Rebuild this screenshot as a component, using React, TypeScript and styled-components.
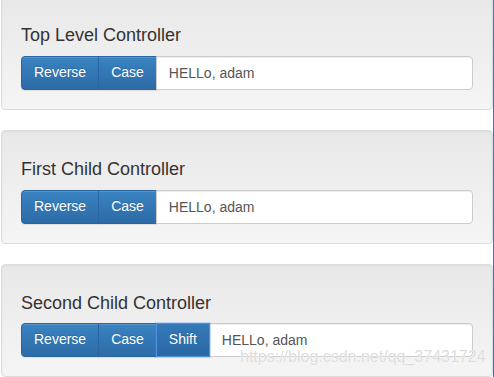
import {FC} from 'react';
import styled, {createGlobalStyle, css} from 'styled-components';

const GlobalStyle = createGlobalStyle`
  html, body {
    margin: 0;
    padding: 0;
    background: #fff;
    overflow: hidden;
  }
  body {
    font-family: "Liberation Sans", Arial, sans-serif;
    font-size: 14px;
    line-height: 1.42857;
    color: #333;
  }
  * {
    box-sizing: border-box;
  }
`;

type ControllerType = {
    title: string
    showShift?: boolean
}

const Controller: FC<ControllerType> = ({title, showShift}) => (
    <Well>
        <Title>{title}</Title>
        <InputGroup>
            <Button>Reverse</Button>
            <Button>Case</Button>
            {showShift && <Button $focused>Shift</Button>}
            <Input defaultValue="HELLo, adam"/>
        </InputGroup>
    </Well>
);

export default function App() {
    return (
        <Page>
            <GlobalStyle/>
            <Controller title="Top Level Controller"/>
            <Controller title="First Child Controller"/>
            <Controller title="Second Child Controller" showShift/>
            <Watermark>https://blog.csdn.net/qq_37431724</Watermark>
        </Page>
    );
}

const Page = styled.div`
  position: relative;
  width: 494px;
  height: 381px;
  padding-left: 1px;
  margin-top: -4px;
  border-right: 1px solid #2b7bd0;
`;

const Well = styled.div`
  min-height: 20px;
  padding: 19px;
  margin-bottom: 20px;
  border: 1px solid #dcdcdc;
  border-radius: 4px;
  background-color: #f5f5f5;
  background-image: linear-gradient(to bottom, #e8e8e8 0, #f5f5f5 100%);
  box-shadow: inset 0 1px 3px rgba(0, 0, 0, 0.05), 0 1px 0 rgba(255, 255, 255, 0.1);
`;

const Title = styled.h4`
  margin: 10px 0 10px;
  font-size: 18px;
  font-weight: 500;
  line-height: 1.1;
  color: #333;
`;

const InputGroup = styled.div`
  display: flex;
  height: 34px;
`;

const Button = styled.button<{ $focused?: boolean }>`
  height: 34px;
  padding: 6px 12px;
  margin-left: -1px;
  font-family: inherit;
  font-size: 14px;
  line-height: 1.42857;
  color: #fff;
  text-shadow: 0 -1px 0 rgba(0, 0, 0, 0.15);
  border: 1px solid #2a65a0;
  border-radius: 0;
  background-color: #3176b3;
  background-image: linear-gradient(to bottom, #3a83c2 0, #2c6ba6 100%);
  box-shadow: inset 0 1px 0 rgba(255, 255, 255, 0.15), 0 1px 1px rgba(0, 0, 0, 0.075);
  cursor: pointer;

  &:first-child {
    margin-left: 0;
    border-radius: 4px 0 0 4px;
  }

  ${props => props.$focused && css`
    position: relative;
    z-index: 2;
    background-image: linear-gradient(to bottom, #3479b8 0, #2a67a3 100%);
    border-color: #4d90e0;
    box-shadow: 0 0 0 1px rgba(77, 144, 224, 0.3);
  `}
`;

const Input = styled.input`
  flex: 1;
  min-width: 0;
  height: 34px;
  padding: 6px 12px;
  margin-left: -1px;
  font-family: inherit;
  font-size: 14px;
  color: #555;
  background: #fff;
  border: 1px solid #ccc;
  border-radius: 0 4px 4px 0;
  box-shadow: inset 0 1px 1px rgba(0, 0, 0, 0.075);
  outline: none;
`;

const Watermark = styled.div`
  position: absolute;
  left: 240px;
  top: 351px;
  font-family: "Liberation Sans", Arial, sans-serif;
  font-size: 16px;
  line-height: 20px;
  color: rgba(205, 205, 205, 0.7);
  text-shadow: 0 0 1px #fff, 0 0 1px #fff;
  pointer-events: none;
  white-space: nowrap;
`;
